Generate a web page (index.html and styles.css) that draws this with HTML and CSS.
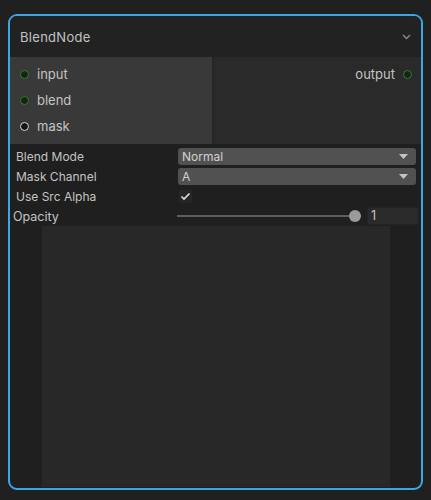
FILE: index.html
```html
<!DOCTYPE html>
<html>
<head>
<meta charset="utf-8">
<link rel="stylesheet" href="styles.css">
</head>
<body>
<div class="node">
  <div class="header">
    <span class="title">BlendNode</span>
    <svg class="chevron" width="9" height="6" viewBox="0 0 9 6"><path d="M1 1 L4.5 4.5 L8 1" fill="none" stroke="#8a8a8a" stroke-width="1.4"/></svg>
  </div>
  <div class="ports">
    <div class="inputs">
      <div class="port"><span class="dot green"></span><span class="pname">input</span></div>
      <div class="port"><span class="dot green"></span><span class="pname">blend</span></div>
      <div class="port"><span class="dot white"></span><span class="pname">mask</span></div>
    </div>
    <div class="divider"></div>
    <div class="outputs">
      <div class="port out"><span class="pname">output</span><span class="dot green"></span></div>
    </div>
  </div>
  <div class="props">
    <div class="row">
      <span class="label">Blend Mode</span>
      <div class="dropdown"><span>Normal</span><svg width="9" height="5" viewBox="0 0 9 5"><path d="M0 0 H9 L4.5 5 Z" fill="#c4c4c4"/></svg></div>
    </div>
    <div class="row">
      <span class="label">Mask Channel</span>
      <div class="dropdown"><span>A</span><svg width="9" height="5" viewBox="0 0 9 5"><path d="M0 0 H9 L4.5 5 Z" fill="#c4c4c4"/></svg></div>
    </div>
    <div class="row">
      <span class="label">Use Src Alpha</span>
      <div class="checkbox"><svg width="11" height="9" viewBox="0 0 11 9"><path d="M1.5 4.5 L4 7 L9.5 1.5" fill="none" stroke="#e0e0e0" stroke-width="1.6"/></svg></div>
    </div>
    <div class="row">
      <span class="label opacity">Opacity</span>
      <div class="slider">
        <div class="track"></div>
        <div class="knob"></div>
      </div>
      <div class="field">1</div>
    </div>
  </div>
  <div class="preview-wrap">
    <div class="preview"></div>
  </div>
</div>
</body>
</html>
```
FILE: styles.css
```css
html, body {
  margin: 0;
  padding: 0;
  background: #202020;
  font-family: Inter, "Noto Sans", sans-serif;
}
.node {
  position: relative;
  margin: 14px 0 0 8px;
  width: 411px;
  height: 472px;
  border: 2px solid #3ba7e6;
  border-radius: 9px;
  background: #1f1f1f;
  overflow: hidden;
  display: flex;
  flex-direction: column;
}
.header {
  height: 41px;
  flex: none;
  background: #222222;
  display: flex;
  align-items: center;
  justify-content: space-between;
  padding: 0 10px 0 10px;
}
.title {
  color: #c2c2c2;
  font-size: 13px;
  letter-spacing: 0.3px;
}
.chevron {
  margin-top: 1px;
}
.ports {
  height: 87px;
  flex: none;
  display: flex;
}
.inputs {
  width: 202px;
  background: #393939;
  padding-top: 4px;
  box-sizing: border-box;
}
.divider {
  width: 2px;
  background: #262626;
}
.outputs {
  flex: 1;
  background: #2a2a2a;
  padding-top: 4px;
  box-sizing: border-box;
}
.port {
  height: 26px;
  display: flex;
  align-items: center;
  padding-left: 10px;
}
.port.out {
  justify-content: flex-end;
  padding-left: 0;
  padding-right: 9px;
}
.dot {
  width: 7px;
  height: 7px;
  border-radius: 50%;
  border: 1.5px solid #1f8a1f;
  background: #1e1e1e;
  flex: none;
}
.dot.white {
  border-color: #d8d8d8;
  background: #151515;
}
.pname {
  color: #c4c4c4;
  font-size: 13px;
  margin-left: 8px;
}
.port.out .pname {
  margin-left: 0;
  margin-right: 8px;
}
.props {
  flex: none;
  padding-top: 2px;
}
.row {
  height: 20px;
  display: flex;
  align-items: center;
}
.label {
  width: 168px;
  padding-left: 6px;
  box-sizing: border-box;
  color: #c4c4c4;
  font-size: 12px;
  flex: none;
}
.label.opacity {
  padding-left: 3px;
  width: 167px;
  font-size: 12.5px;
}
.dropdown {
  width: 238px;
  height: 17px;
  background: #515151;
  border-radius: 3px;
  display: flex;
  align-items: center;
  justify-content: space-between;
  padding: 0 8px 0 4px;
  box-sizing: border-box;
  color: #d2d2d2;
  font-size: 12px;
}
.checkbox {
  width: 13px;
  height: 13px;
  margin-left: 1px;
  background: #262626;
  border-radius: 2px;
  display: flex;
  align-items: center;
  justify-content: center;
}
.slider {
  position: relative;
  width: 185px;
  height: 20px;
  flex: none;
}
.track {
  position: absolute;
  left: 0;
  right: 7px;
  top: 9px;
  height: 2px;
  background: #5e5e5e;
}
.knob {
  position: absolute;
  right: 1px;
  top: 4px;
  width: 12px;
  height: 12px;
  border-radius: 50%;
  background: #9a9a9a;
}
.field {
  margin-left: 5px;
  width: 52px;
  height: 18px;
  background: #2a2a2a;
  border: 1px solid #232323;
  box-sizing: border-box;
  border-radius: 2px;
  color: #c8c8c8;
  font-size: 12.5px;
  padding-left: 3px;
  line-height: 16px;
}
.preview-wrap {
  flex: 1;
  display: flex;
  padding: 0 0 1px 32px;
}
.preview {
  width: 348px;
  background: #282828;
}
```
